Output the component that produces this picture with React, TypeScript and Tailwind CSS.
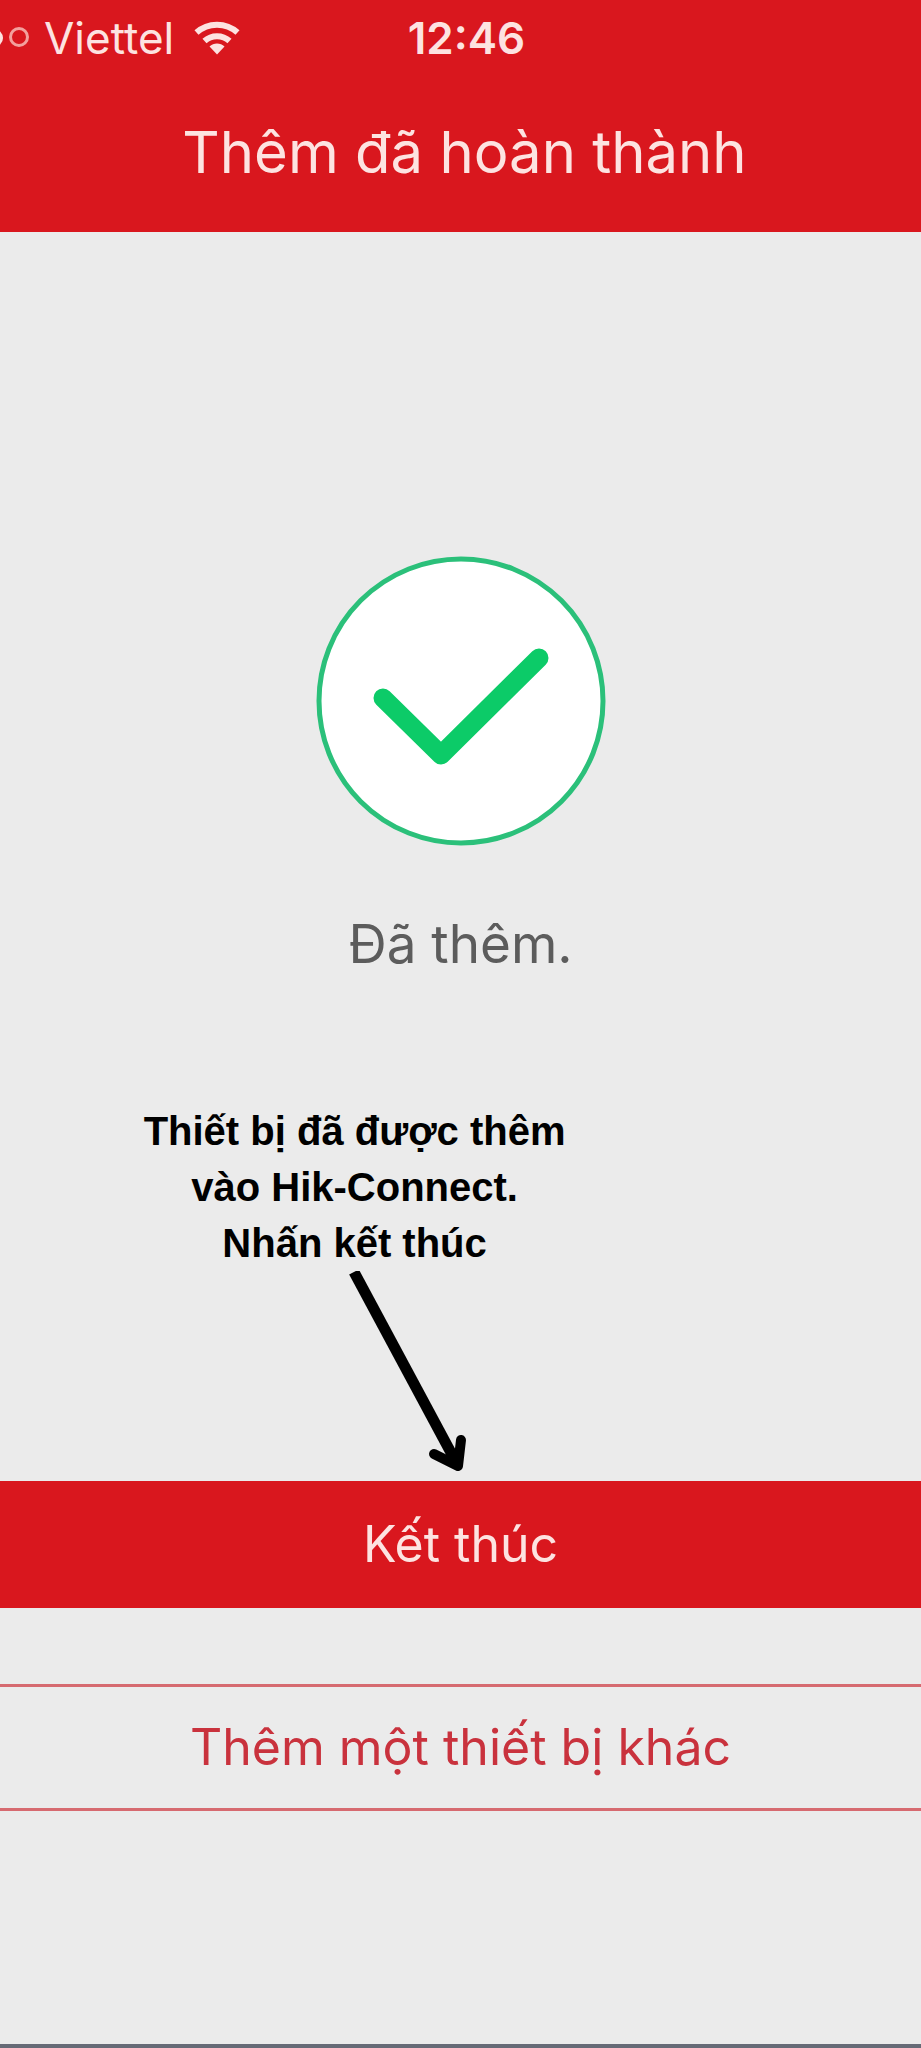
function WifiIcon() {
  return (
    <svg viewBox="0 0 46 34" className="h-[34px] w-[46px]" fill="none" stroke="#fde3e1" aria-label="Wi-Fi" role="img">
      <path d="M2.500 11.500C14 1 32 1 43.500 11.500" strokeWidth="6" />
      <path d="M10.500 20c7-6.500 18-6.500 25 0" strokeWidth="6" />
      <path d="M23 33.500l-7.500-8c4-4 11-4 15 0z" fill="#fde3e1" stroke="none" />
    </svg>
  );
}

function SignalDots() {
  return (
    <svg viewBox="0 0 32 24" className="h-6 w-8" aria-hidden="true">
      <circle cx="-6" cy="12" r="9" fill="#fde3e1" />
      <circle cx="19" cy="11" r="8.500" fill="none" stroke="#f3a09d" strokeWidth="3" />
    </svg>
  );
}

function StatusBar() {
  return (
    <div className="grid h-[76px] grid-cols-3 items-center text-[44px] leading-[76px] text-[#fde3e1]">
      <div className="flex items-center whitespace-nowrap">
        <SignalDots />
        <span className="ml-3">Viettel</span>
        <span className="ml-5">
          <WifiIcon />
        </span>
      </div>
      <time className="pl-3 text-center font-semibold">12:46</time>
    </div>
  );
}

function SuccessIcon() {
  return (
    <svg viewBox="0 0 290 290" className="h-[290px] w-[290px]" role="img" aria-label="Thành công">
      <circle cx="145" cy="145" r="142" fill="#ffffff" stroke="#2bc07a" strokeWidth="5" />
      <path
        d="M67 142L125 199L223 102"
        fill="none"
        stroke="#0ccb68"
        strokeWidth="19"
        strokeLinecap="round"
        strokeLinejoin="round"
      />
    </svg>
  );
}

function PointerArrow() {
  return (
    <svg viewBox="0 0 136 210" className="ml-[37%] h-[210px] w-[136px]" fill="none" stroke="#000000" aria-hidden="true">
      <path d="M13 1L115 191" strokeWidth="11" />
      <path d="M93 183L117 195L120 169" strokeWidth="10" strokeLinecap="round" strokeLinejoin="round" />
    </svg>
  );
}

export default function App() {
  return (
    <div className="flex min-h-screen flex-col overflow-x-hidden border-b-4 border-[#666a76] bg-[#ebebeb] font-['Inter','Noto_Sans',sans-serif]">
      <header className="h-[232px] bg-[#d9171e]">
        <StatusBar />
        <h1 className="pl-2 text-center text-[58px] leading-[152px] text-[#fde3e1]">Thêm đã hoàn thành</h1>
      </header>

      <main className="flex flex-col">
        <section className="flex flex-col items-center pt-[324px]">
          <SuccessIcon />
          <p className="mt-16 text-[53px] leading-[68px] text-[#5c5c5c]">Đã thêm.</p>
        </section>

        <aside className="mt-[125px]">
          <p className="w-[77%] text-center font-['Liberation_Sans',sans-serif] text-[40px] leading-[56px] font-bold text-black">
            Thiết bị đã được thêm
            <br />
            vào Hik-Connect.
            <br />
            Nhấn kết thúc
          </p>
          <PointerArrow />
        </aside>

        <div className="flex flex-col gap-[76px]">
          <button type="button" className="h-[127px] w-full bg-[#d9171e] text-[50px] text-[#fde3e1]">
            Kết thúc
          </button>
          <button type="button" className="h-[127px] w-full border-y-3 border-[#d66a70] text-[50px] text-[#c9323d]">
            Thêm một thiết bị khác
          </button>
        </div>
      </main>
    </div>
  );
}
